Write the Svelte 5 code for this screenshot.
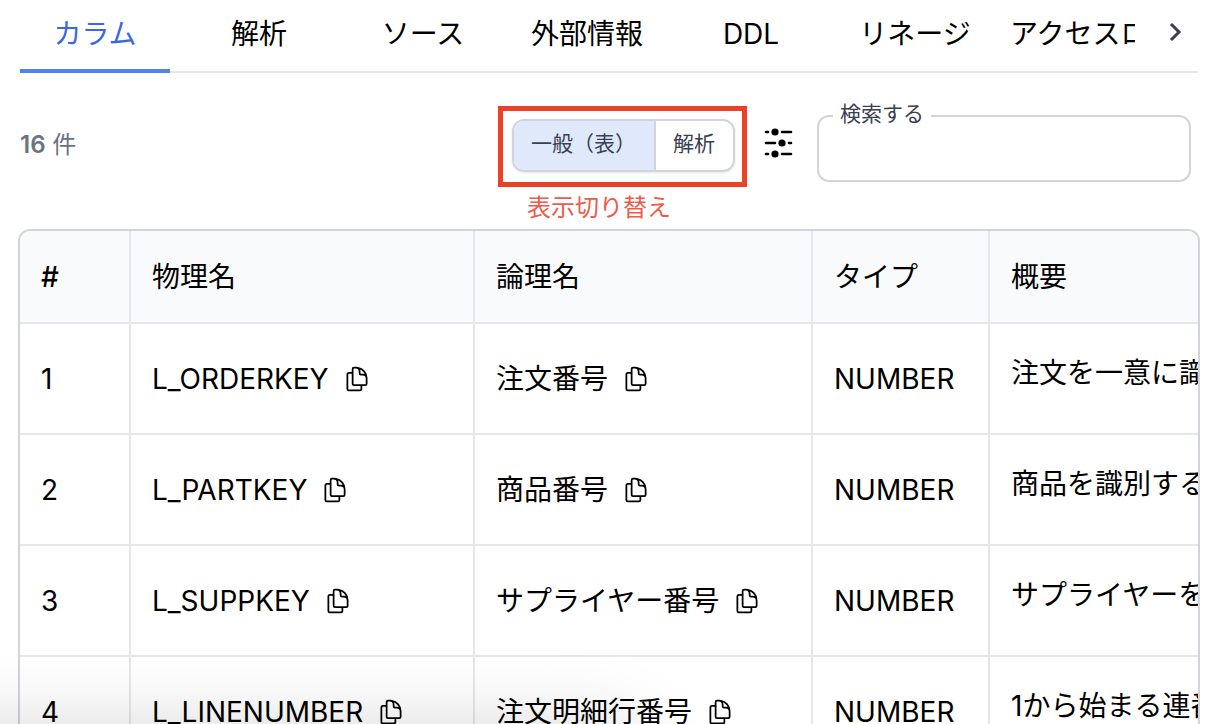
<script>
	const tabs = ['カラム', '解析', 'ソース', '外部情報', 'DDL', 'リネージ', 'アクセスログ'];
	const headers = ['#', '物理名', '論理名', 'タイプ', '概要'];
	const rows = [
		{ name: 'L_ORDERKEY', logical: '注文番号', type: 'NUMBER', summary: '注文を一意に識別する番号' },
		{ name: 'L_PARTKEY', logical: '商品番号', type: 'NUMBER', summary: '商品を識別する番号' },
		{ name: 'L_SUPPKEY', logical: 'サプライヤー番号', type: 'NUMBER', summary: 'サプライヤーを識別する番号' },
		{ name: 'L_LINENUMBER', logical: '注文明細行番号', type: 'NUMBER', summary: '1から始まる連番' }
	];

	let active = $state(0);
	let view = $state('table');
	let search = $state('');
</script>

{#snippet copy(text)}
	<button class="copy" aria-label="コピー" onclick={() => navigator.clipboard?.writeText(text)}>
		<svg viewBox="0 0 24 24" width="28" height="28">
			<path d="M15.75 17.25v3.375c0 .621-.504 1.125-1.125 1.125h-9.75a1.125 1.125 0 0 1-1.125-1.125V7.875c0-.621.504-1.125 1.125-1.125H6.75a9.06 9.06 0 0 1 1.5.124m7.5 10.376h3.375c.621 0 1.125-.504 1.125-1.125V11.25c0-4.46-3.243-8.161-7.5-8.876a9.06 9.06 0 0 0-1.5-.124H9.375c-.621 0-1.125.504-1.125 1.125v3.5m7.5 10.375H9.375a1.125 1.125 0 0 1-1.125-1.125v-9.25m12 6.625v-1.875a3.375 3.375 0 0 0-3.375-3.375h-1.5a1.125 1.125 0 0 1-1.125-1.125v-1.5a3.375 3.375 0 0 0-3.375-3.375H9.75" />
		</svg>
	</button>
{/snippet}

<main class="page">
	<nav class="tabs">
		<div class="tab-list" role="tablist">
			{#each tabs as tab, i}
				<button class="tab" class:active={active === i} role="tab" aria-selected={active === i} onclick={() => (active = i)}>{tab}</button>
			{/each}
		</div>
		<button class="next" aria-label="次へ">
			<svg viewBox="0 0 24 24" width="24" height="24"><path d="M8 4l8 8-8 8" /></svg>
		</button>
	</nav>

	<section class="toolbar">
		<div class="count"><span class="number">16</span> 件</div>
		<div class="switcher">
			<div class="frame">
				<div class="toggle">
					<button class:selected={view === 'table'} onclick={() => (view = 'table')}>一般（表）</button>
					<button class:selected={view === 'analysis'} onclick={() => (view = 'analysis')}>解析</button>
				</div>
			</div>
			<div class="note">表示切り替え</div>
		</div>
		<button class="filter" aria-label="表示設定">
			<svg viewBox="0 0 30 30" width="30" height="30">
				<path d="M2 4h2M18 4h9M2 15h9M25 15h2M2 26h2M18 26h9" />
				<circle cx="11" cy="4" r="3.6" />
				<circle cx="18" cy="15" r="3.6" />
				<circle cx="11" cy="26" r="3.6" />
			</svg>
		</button>
		<div class="search">
			<label for="search">検索する</label>
			<input id="search" type="text" bind:value={search} />
		</div>
	</section>

	<div class="table-wrap">
		<table>
			<colgroup>
				<col class="col-no" />
				<col class="col-name" />
				<col class="col-logical" />
				<col class="col-type" />
				<col />
			</colgroup>
			<thead>
				<tr>
					{#each headers as header}
						<th>{header}</th>
					{/each}
				</tr>
			</thead>
			<tbody>
				{#each rows as row, i}
					<tr>
						<td>{i + 1}</td>
						<td><div class="cell">{row.name}{@render copy(row.name)}</div></td>
						<td><div class="cell">{row.logical}{@render copy(row.logical)}</div></td>
						<td>{row.type}</td>
						<td class="summary">{row.summary}</td>
					</tr>
				{/each}
			</tbody>
		</table>
	</div>
	<div class="shade"></div>
</main>

<style>
	:global(body) {
		margin: 0;
		background: #fff;
	}
	.page {
		position: relative;
		box-sizing: border-box;
		height: 100vh;
		padding: 0 18px;
		overflow: hidden;
		color: #000;
		font-family: Inter, 'Noto Sans CJK JP', sans-serif;
		font-size: 28px;
		line-height: 40px;
	}
	button {
		margin: 0;
		padding: 0;
		border: none;
		background: none;
		color: inherit;
		font: inherit;
		cursor: pointer;
	}
	svg {
		display: block;
		fill: none;
		stroke: currentColor;
		stroke-linecap: round;
		stroke-linejoin: round;
	}

	.tabs {
		display: flex;
		margin: 0 2px;
		box-shadow: inset 0 -2px #e5e7eb;
	}
	.tab-list {
		display: flex;
		flex: 1;
		gap: 14px;
		min-width: 0;
		overflow: hidden;
	}
	.tab {
		box-sizing: border-box;
		flex: none;
		min-width: 150px;
		height: 73px;
		padding: 0 6px 2px;
		border-bottom: 4px solid transparent;
		white-space: nowrap;
	}
	.tab.active {
		border-color: #4f83f1;
		color: #3b66e5;
	}
	.next {
		display: flex;
		align-items: center;
		justify-content: flex-end;
		width: 63px;
		padding: 0 11px 10px 0;
		box-sizing: border-box;
		color: #374151;
		stroke-width: 3;
	}
	.next svg {
		stroke-linecap: butt;
		stroke-linejoin: miter;
	}

	.toolbar {
		display: flex;
		align-items: flex-start;
		height: 123px;
		margin: 33px 9px 0 2px;
	}
	.count {
		flex: 1;
		padding-top: 19px;
		color: #6b7280;
		font-size: 24px;
	}
	.number {
		font-weight: 600;
	}
	.frame {
		padding: 8px 7px 10px 9px;
		border: 5px solid #ec4127;
	}
	.toggle {
		display: flex;
		border: 2px solid #d1d5db;
		border-radius: 12px;
		overflow: hidden;
		box-shadow: 0 1px 3px rgba(0, 0, 0, 0.1);
		color: #374151;
		font-size: 21px;
	}
	.toggle button {
		height: 49px;
		padding: 0 18px 4px 17px;
	}
	.toggle button + button {
		border-left: 2px solid #d1d5db;
	}
	.toggle .selected {
		background: #dfe9fb;
	}
	.note {
		padding: 1px 0 0 29px;
		color: #ee5b4c;
		font-size: 24px;
	}
	.filter {
		margin: 22px 23px 0 17px;
	}
	.filter svg {
		fill: #000;
		stroke-width: 2.6;
	}
	.filter circle {
		stroke: none;
	}
	.search {
		position: relative;
		width: 374px;
		margin-top: 9px;
	}
	.search label {
		position: absolute;
		top: -17px;
		left: 16px;
		padding: 0 7px;
		background: #fff;
		color: #374151;
		font-size: 21px;
		line-height: 32px;
	}
	.search input {
		box-sizing: border-box;
		width: 100%;
		height: 67px;
		padding: 0 20px;
		border: 2px solid #d1d5db;
		border-radius: 12px;
		outline: none;
		font: inherit;
	}

	.table-wrap {
		border: 2px solid #d1d5db;
		border-radius: 12px;
		overflow: hidden;
	}
	table {
		width: 100%;
		border-spacing: 0;
		table-layout: fixed;
	}
	.col-no {
		width: 111px;
	}
	.col-name {
		width: 344px;
	}
	.col-logical {
		width: 338px;
	}
	.col-type {
		width: 177px;
	}
	th,
	td {
		box-sizing: border-box;
		height: 111px;
		padding: 0 0 0 21px;
		border-right: 2px solid #e5e7eb;
		border-bottom: 2px solid #e5e7eb;
		text-align: left;
		white-space: nowrap;
	}
	th {
		height: 93px;
		background: #f9fafb;
		font-weight: 400;
	}
	th:first-child {
		font-weight: 500;
	}
	th:last-child,
	td:last-child {
		border-right: none;
	}
	.cell {
		display: flex;
		align-items: center;
		gap: 14px;
	}
	.copy svg {
		stroke-width: 1.5;
	}
	.summary {
		padding-bottom: 12px;
	}

	/* soft shadow of the panel under the list */
	.shade {
		position: absolute;
		right: 48%;
		bottom: -60px;
		left: -120px;
		height: 50px;
		box-shadow: 0 0 80px rgba(0, 0, 0, 0.22);
		pointer-events: none;
	}
</style>
